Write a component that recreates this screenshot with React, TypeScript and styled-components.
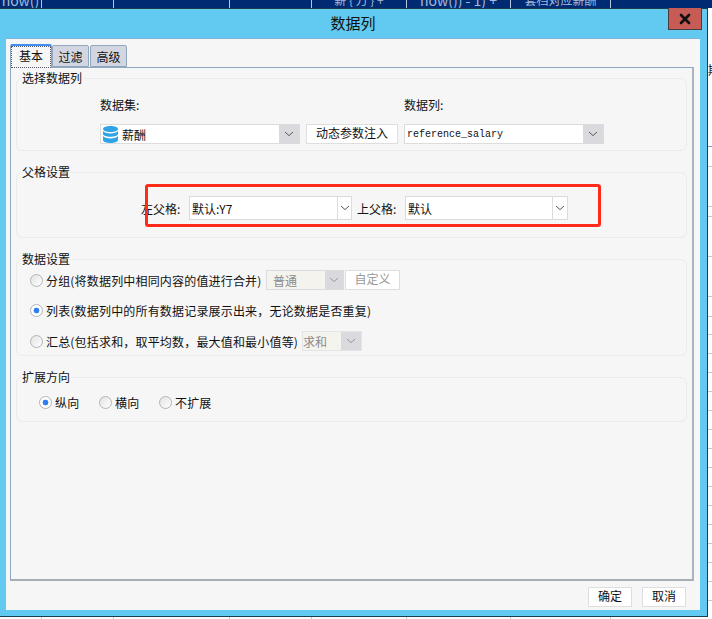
import React from 'react';
import styled, { createGlobalStyle } from 'styled-components';
import { X } from 'lucide-react';

const cjk = '"Noto Sans CJK SC", "Liberation Sans", sans-serif';

const columnWidths = [42, 72, 116, 82, 95, 104, 100];
const edgeRows = [139, 20, 40, 10, 40, 40, 20, 18, ...Array(15).fill(19)];

const listLabel = '列表(数据列中的所有数据记录展示出来\uFF0C无论数据是否重复)';
const sumLabel = '汇总(包括求和\uFF0C取平均数\uFF0C最大值和最小值等)';

const GlobalStyle = createGlobalStyle`
  html, body { margin: 0; padding: 0; background: #fff; }
  body { font-family: ${cjk}; font-size: 12px; color: #111; }
`;

const Page = styled.div`
  width: 712px;
  height: 619px;
  overflow: hidden;
  display: flex;
  flex-direction: column;
`;

const SheetHeader = styled.div`
  height: 8px;
  flex: none;
  overflow: hidden;
  display: flex;
  background: #002b73;
`;

const HeaderCell = styled.div<{ w: number; big?: boolean }>`
  width: ${(p) => p.w}px;
  flex: none;
  box-sizing: border-box;
  height: 8px;
  border-right: 1px solid #b5c9e6;
  color: #a6bbdc;
  font-size: ${(p) => (p.big ? 14 : 12)}px;
  line-height: 14px;
  text-align: center;
  white-space: nowrap;

  span {
    display: block;
    margin-top: -7px;
  }
`;

const SheetFooter = styled.div`
  height: 2px;
  flex: none;
  display: flex;
`;

const FooterTick = styled.div<{ w: number }>`
  width: ${(p) => p.w}px;
  flex: none;
  box-sizing: border-box;
  border-right: 1px solid #c8c8c8;
`;

const Body = styled.div`
  height: 609px;
  flex: none;
  display: flex;
`;

const Dialog = styled.div`
  width: 708px;
  height: 609px;
  flex: none;
  box-sizing: border-box;
  background: #62c9f0;
  border-top: 1px solid #1d3d4d;
  border-right: 1px solid #1d3d4d;
  border-bottom: 1px solid #1d3d4d;
  padding: 0 7px 6px 6px;
  display: flex;
  flex-direction: column;
`;

const SheetEdge = styled.div`
  flex: 1;
  min-width: 0;
  overflow: hidden;
  display: flex;
  flex-direction: column;
`;

const EdgeRow = styled.div<{ h: number; accent?: boolean }>`
  height: ${(p) => p.h}px;
  flex: none;
  box-sizing: border-box;
  overflow: hidden;
  border-bottom: 1px solid ${(p) => (p.accent ? '#7d9fd0' : '#c8c8c8')};
  white-space: nowrap;
`;

const EdgeText = styled.div`
  padding-top: 54px;
  font-size: 12px;
  line-height: 16px;
`;

const TitleBar = styled.div`
  height: 29px;
  flex: none;
  position: relative;
  display: flex;
  align-items: center;
  justify-content: center;
  font-size: 15px;
  color: #111;
  padding-bottom: 2px;
  box-sizing: border-box;
`;

const CloseButton = styled.button`
  position: absolute;
  top: -1px;
  right: -2px;
  width: 34px;
  height: 22px;
  box-sizing: border-box;
  padding: 0;
  background: #c75b55;
  border: 1px solid #4d3a3d;
  border-top: none;
  display: flex;
  align-items: center;
  justify-content: center;
  color: #111;
`;

const Client = styled.div`
  flex: 1;
  background: #f6f6f6;
  border-top: 1px solid #7fb4d6;
  padding: 4px 6px 0 4px;
  display: flex;
  flex-direction: column;
`;

const TabRow = styled.div`
  height: 24px;
  flex: none;
  display: flex;
  align-items: flex-end;
  gap: 1px;
  position: relative;
  z-index: 1;
`;

const Tab = styled.div<{ active?: boolean }>`
  box-sizing: border-box;
  width: ${(p) => (p.active ? 42 : 37)}px;
  height: ${(p) => (p.active ? 24 : 22)}px;
  margin-bottom: ${(p) => (p.active ? -1 : 0)}px;
  margin-right: ${(p) => (p.active ? -1 : 0)}px;
  background: ${(p) => (p.active ? '#f6f6f6' : '#d3d6e0')};
  border: 1px solid #8fa8c0;
  border-top: ${(p) => (p.active ? '2px solid #3f8fef' : '1px solid #8fa8c0')};
  border-bottom: ${(p) => (p.active ? 'none' : '1px solid #8fa8c0')};
  border-radius: 2px 2px 0 0;
  display: flex;
  align-items: ${(p) => (p.active ? 'stretch' : 'center')};
  justify-content: center;
  font-size: 12px;
  padding: ${(p) => (p.active ? '1px' : '0')};

  span {
    flex: ${(p) => (p.active ? 1 : 'none')};
    text-align: center;
    line-height: 17px;
    outline: ${(p) => (p.active ? '1px dotted #556' : 'none')};
  }
`;

const TabPanel = styled.div`
  height: 514px;
  flex: none;
  box-sizing: border-box;
  background: #f6f6f6;
  border: 1px solid #8fa8c0;
  border-bottom: 2px solid #a5adb5;
  border-right: 2px solid #a9b4c0;
  padding: 2px 5px 0 5px;
  display: flex;
  flex-direction: column;
`;

const Group = styled.fieldset<{ h: number }>`
  margin: 0 0 13px;
  padding: 0;
  min-width: 0;
  box-sizing: border-box;
  height: ${(p) => p.h}px;
  border: 1px solid #ebebeb;
  border-radius: 6px;
  position: relative;
`;

const GroupTitle = styled.legend`
  margin-left: 4px;
  padding: 0 1px;
  font-size: 12px;
  line-height: 16px;
  height: 16px;
`;

const SourceGrid = styled.div`
  display: grid;
  grid-template-columns: 200px 92px 200px;
  column-gap: 6px;
  row-gap: 11px;
  padding: 11px 0 0 83px;
  grid-template-rows: 16px 20px;
`;

const FieldLabel = styled.div`
  font-size: 12px;
  line-height: 16px;
  white-space: nowrap;
`;

const Select = styled.div<{ w: number; h?: number; disabled?: boolean; bare?: boolean }>`
  width: ${(p) => p.w}px;
  height: ${(p) => p.h ?? 20}px;
  box-sizing: border-box;
  flex: none;
  display: flex;
  align-items: center;
  background: ${(p) => (p.disabled ? '#f5f3ee' : '#fff')};
  border: 1px solid ${(p) => (p.bare ? '#e4e4e4' : '#dcdcdc')};
  color: ${(p) => (p.disabled ? '#8a8a8a' : '#111')};
`;

const SelectValue = styled.div<{ mono?: boolean; inset?: number }>`
  flex: 1;
  min-width: 0;
  padding-left: ${(p) => p.inset ?? 2}px;
  display: flex;
  align-items: center;
  gap: 4px;
  white-space: nowrap;
  font-size: ${(p) => (p.mono ? '10px' : '12px')};
  font-family: ${(p) => (p.mono ? '"Liberation Mono", monospace' : cjk)};
`;

const Arrow = styled.div<{ w: number; light?: boolean }>`
  width: ${(p) => p.w}px;
  flex: none;
  align-self: stretch;
  display: flex;
  align-items: center;
  justify-content: center;
  background: ${(p) => (p.light ? '#fff' : '#dadade')};
  border-left: ${(p) => (p.light ? '1px solid #dcdcdc' : 'none')};
`;

const Button = styled.button<{ w: number; disabled?: boolean }>`
  width: ${(p) => p.w}px;
  height: 20px;
  flex: none;
  box-sizing: border-box;
  padding: 0 0 3px;
  background: #fff;
  border: 1px solid #dedede;
  border-radius: 0;
  font-family: ${cjk};
  font-size: 12px;
  line-height: 16px;
  color: ${(p) => (p.disabled ? '#9a9a9a' : '#111')};
`;

const CustomButton = styled(Button)`
  margin-left: 1px;
`;

const ParentRow = styled.div`
  display: flex;
  align-items: center;
  padding: 16px 0 0 124px;
  font-size: 12px;
`;

const ParentLabel = styled.div<{ gapLeft?: number }>`
  width: 48px;
  flex: none;
  margin-left: ${(p) => p.gapLeft ?? 0}px;
  white-space: nowrap;
`;

const RedMark = styled.div`
  position: absolute;
  left: 128px;
  top: 4px;
  width: 456px;
  height: 43px;
  box-sizing: border-box;
  border: 3px solid #ff2a1a;
  border-radius: 3px;
  pointer-events: none;
`;

const OptionList = styled.div`
  display: flex;
  flex-direction: column;
  margin-top: -2px;
  padding-left: 13px;
`;

const OptionRow = styled.div`
  height: 30.5px;
  display: flex;
  align-items: center;
  white-space: nowrap;
`;

const Radio = styled.span<{ checked?: boolean }>`
  width: 13px;
  height: 13px;
  flex: none;
  box-sizing: border-box;
  border-radius: 50%;
  border: 1px solid #b4b4b4;
  background: ${(p) =>
    p.checked
      ? 'radial-gradient(circle, #2f7ff0 0 2.6px, #fff 3.2px)'
      : 'linear-gradient(135deg, #e2e2e2, #fff)'};
  margin-right: 3px;
`;

const OptionText = styled.span<{ w?: number }>`
  font-size: 12px;
  letter-spacing: 0.18px;
  ${(p) => (p.w ? `width: ${p.w}px; flex: none;` : '')}
`;

const DirectionRow = styled.div`
  display: flex;
  align-items: center;
  height: 20px;
  padding: 7px 0 0 22px;
`;

const DirectionItem = styled.div`
  width: 60px;
  display: flex;
  align-items: center;
  white-space: nowrap;
`;

const Footer = styled.div`
  flex: 1;
  display: flex;
  justify-content: flex-end;
  align-items: flex-start;
  gap: 10px;
  padding: 6px 8px 0 0;
`;

const Chevron = ({ pale }: { pale?: boolean }) => (
  <svg width="10" height="6" viewBox="0 0 10 6">
    <path d="M1 1l4 3.6L9 1" fill="none" stroke={pale ? '#999' : '#555'} strokeWidth="1" />
  </svg>
);

const DatabaseIcon = () => (
  <svg width="15" height="17" viewBox="0 0 15 17">
    <path d="M0 3c0-1.700 3.400-3 7.500-3S15 1.300 15 3s-3.400 3-7.500 3S0 4.700 0 3z" fill="#2ea3e6" />
    <path d="M0 5c1 1.500 4 2.400 7.500 2.400S14 6.500 15 5v3c0 1.500-3.400 2.700-7.500 2.700S0 9.500 0 8z" fill="#2ea3e6" />
    <path d="M0 10c1 1.500 4 2.400 7.500 2.400S14 11.500 15 10v4c0 1.700-3.400 3-7.500 3S0 15.700 0 14z" fill="#2ea3e6" />
  </svg>
);

export default function App() {
  return (
    <Page>
      <GlobalStyle />
      <SheetHeader>
        <HeaderCell w={42} big><span>now()</span></HeaderCell>
        <HeaderCell w={72} />
        <HeaderCell w={116} />
        <HeaderCell w={82} />
        <HeaderCell w={95}><span>薪 {'{'} 万 {'}'} +</span></HeaderCell>
        <HeaderCell w={104} big><span>now()) - 1) +</span></HeaderCell>
        <HeaderCell w={100}><span>套档对应薪酬</span></HeaderCell>
      </SheetHeader>
      <Body>
        <Dialog>
          <TitleBar>
            数据列
            <CloseButton aria-label="关闭">
              <X size={16} strokeWidth={4} />
            </CloseButton>
          </TitleBar>
          <Client>
            <TabRow>
              <Tab active><span>基本</span></Tab>
              <Tab><span>过滤</span></Tab>
              <Tab><span>高级</span></Tab>
            </TabRow>
            <TabPanel>
              <Group h={81}>
                <GroupTitle>选择数据列</GroupTitle>
                <SourceGrid>
                  <FieldLabel>数据集:</FieldLabel>
                  <FieldLabel />
                  <FieldLabel>数据列:</FieldLabel>
                  <Select w={200}>
                    <SelectValue><DatabaseIcon />薪酬</SelectValue>
                    <Arrow w={20}><Chevron /></Arrow>
                  </Select>
                  <Button w={92}>动态参数注入</Button>
                  <Select w={200}>
                    <SelectValue mono>reference_salary</SelectValue>
                    <Arrow w={20}><Chevron /></Arrow>
                  </Select>
                </SourceGrid>
              </Group>
              <Group h={74}>
                <GroupTitle>父格设置</GroupTitle>
                <ParentRow>
                  <ParentLabel>左父格:</ParentLabel>
                  <Select w={163} h={24}>
                    <SelectValue>默认:Y7</SelectValue>
                    <Arrow w={13} light><Chevron /></Arrow>
                  </Select>
                  <ParentLabel gapLeft={5}>上父格:</ParentLabel>
                  <Select w={163} h={24}>
                    <SelectValue>默认</SelectValue>
                    <Arrow w={14} light><Chevron /></Arrow>
                  </Select>
                </ParentRow>
                <RedMark />
              </Group>
              <Group h={105}>
                <GroupTitle>数据设置</GroupTitle>
                <OptionList>
                  <OptionRow>
                    <Radio />
                    <OptionText w={220}>分组(将数据列中相同内容的值进行合并)</OptionText>
                    <Select w={78} disabled>
                      <SelectValue inset={6}>普通</SelectValue>
                      <Arrow w={18}><Chevron pale /></Arrow>
                    </Select>
                    <CustomButton w={55} disabled>自定义</CustomButton>
                  </OptionRow>
                  <OptionRow>
                    <Radio checked />
                    <OptionText>{listLabel}</OptionText>
                  </OptionRow>
                  <OptionRow>
                    <Radio />
                    <OptionText w={256}>{sumLabel}</OptionText>
                    <Select w={60} disabled bare>
                      <SelectValue inset={0}>求和</SelectValue>
                      <Arrow w={20}><Chevron pale /></Arrow>
                    </Select>
                  </OptionRow>
                </OptionList>
              </Group>
              <Group h={53}>
                <GroupTitle>扩展方向</GroupTitle>
                <DirectionRow>
                  <DirectionItem><Radio checked /><OptionText>纵向</OptionText></DirectionItem>
                  <DirectionItem><Radio /><OptionText>横向</OptionText></DirectionItem>
                  <DirectionItem><Radio /><OptionText>不扩展</OptionText></DirectionItem>
                </DirectionRow>
              </Group>
            </TabPanel>
            <Footer>
              <Button w={44}>确定</Button>
              <Button w={44}>取消</Button>
            </Footer>
          </Client>
        </Dialog>
        <SheetEdge>
          {edgeRows.map((h, i) => (
            <EdgeRow key={i} h={h} accent={i === 0}>
              {i === 0 && <EdgeText>期</EdgeText>}
            </EdgeRow>
          ))}
        </SheetEdge>
      </Body>
      <SheetFooter>
        {columnWidths.map((w, i) => (
          <FooterTick key={i} w={w} />
        ))}
      </SheetFooter>
    </Page>
  );
}
